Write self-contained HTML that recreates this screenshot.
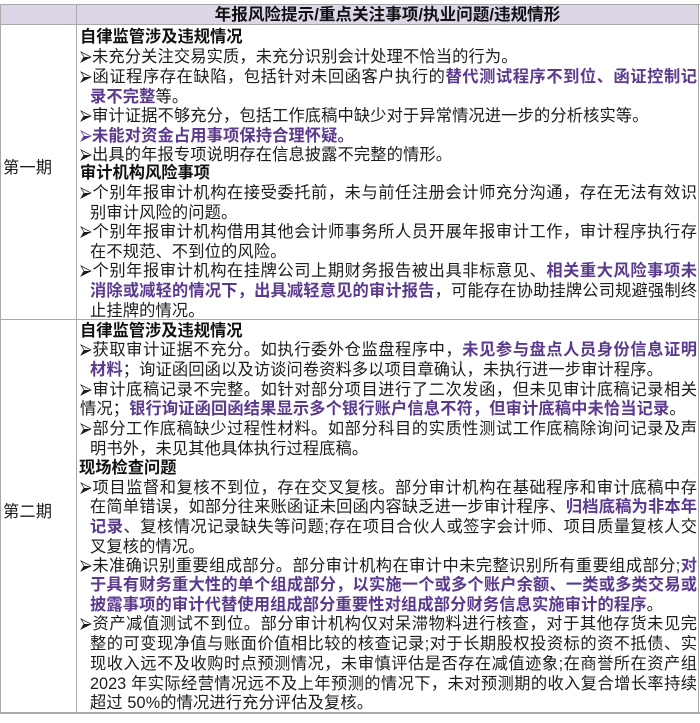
<!DOCTYPE html>
<html lang="zh"><head><meta charset="utf-8">
<style>
html,body{margin:0;padding:0;background:#fff}
#p{position:relative;width:700px;height:723px;overflow:hidden;background:#fff;color:#1c1c1c;font-family:"Liberation Sans","Noto Sans CJK SC",sans-serif;font-size:16.25px;filter:blur(.3px)}
.h{position:absolute;background:#a9a9a9}
.l{position:absolute;left:80px;width:617px;height:20px;line-height:20px;white-space:nowrap;margin-top:1px;letter-spacing:.12px}
.c{left:90px;width:607px}
.j{text-align:justify;text-align-last:justify;text-justify:inter-character;white-space:normal;letter-spacing:0}
.b{font-weight:700;color:#111;letter-spacing:0}
.v{color:#5b3a8e;font-weight:700}
svg{display:inline-block;width:12px;height:12px;vertical-align:-1px;fill:#1a1a1a;stroke:#1a1a1a;stroke-width:.7}
.v svg{fill:#5b3a8e;stroke:#5b3a8e}
.o{fill:none}
.f{stroke:none}
</style></head><body><div id="p">
<svg width="0" height="0" style="position:absolute;width:0;height:0"><symbol id="a" viewBox="0 0 12 12"><path class="o" d="M1 1 11 6 1 11 4 6Z"/><path class="f" d="M4 6H11L1 11Z"/></symbol></svg>
<div style="position:absolute;left:1px;top:5px;width:698px;height:19px;background:#dcd6e6"></div>
<div class="h" style="left:0;top:4px;width:700px;height:1px"></div>
<div class="h" style="left:0;top:24px;width:700px;height:1px"></div>
<div class="h" style="left:0;top:319px;width:700px;height:1px"></div>
<div class="h" style="left:0;top:712px;width:700px;height:2px"></div>
<div class="h" style="left:0;top:4px;width:1px;height:710px"></div>
<div class="h" style="left:76px;top:4px;width:1px;height:710px"></div>
<div class="h" style="left:698px;top:4px;width:1px;height:710px"></div>
<div class="l b" style="left:77px;width:621px;top:4px;height:19px;line-height:20px;text-align:center;font-size:16.6px">年报风险提示/重点关注事项/执业问题/违规情形</div>
<div class="l" style="left:3px;width:70px;top:157px">第一期</div>
<div class="l" style="left:3px;width:70px;top:501px">第二期</div>

<div class="l b" style="top:26px">自律监管涉及违规情况</div>
<div class="l" style="top:46px"><svg viewBox="0 0 12 12"><use href="#a"/></svg>未充分关注交易实质，未充分识别会计处理不恰当的行为。</div>
<div class="l j" style="top:66px"><svg viewBox="0 0 12 12"><use href="#a"/></svg>函证程序存在缺陷，包括针对未回函客户执行的<span class="v">替代测试程序不到位、函证控制记</span></div>
<div class="l c" style="top:86px"><span class="v">录不完整</span>等。</div>
<div class="l" style="top:105px"><svg viewBox="0 0 12 12"><use href="#a"/></svg>审计证据不够充分，包括工作底稿中缺少对于异常情况进一步的分析核实等。</div>
<div class="l v" style="top:125px"><svg viewBox="0 0 12 12"><use href="#a"/></svg>未能对资金占用事项保持合理怀疑。</div>
<div class="l" style="top:144px"><svg viewBox="0 0 12 12"><use href="#a"/></svg>出具的年报专项说明存在信息披露不完整的情形。</div>
<div class="l b" style="top:162px">审计机构风险事项</div>
<div class="l j" style="top:182px"><svg viewBox="0 0 12 12"><use href="#a"/></svg>个别年报审计机构在接受委托前，未与前任注册会计师充分沟通，存在无法有效识</div>
<div class="l c" style="top:202px">别审计风险的问题。</div>
<div class="l j" style="top:221px"><svg viewBox="0 0 12 12"><use href="#a"/></svg>个别年报审计机构借用其他会计师事务所人员开展年报审计工作，审计程序执行存</div>
<div class="l c" style="top:241px">在不规范、不到位的风险。</div>
<div class="l j" style="top:260px"><svg viewBox="0 0 12 12"><use href="#a"/></svg>个别年报审计机构在挂牌公司上期财务报告被出具非标意见、<span class="v">相关重大风险事项未</span></div>
<div class="l c j" style="top:280px"><span class="v">消除或减轻的情况下，出具减轻意见的审计报告</span>，可能存在协助挂牌公司规避强制终</div>
<div class="l c" style="top:300px">止挂牌的情况。</div>

<div class="l b" style="top:320px">自律监管涉及违规情况</div>
<div class="l j" style="top:339px"><svg viewBox="0 0 12 12"><use href="#a"/></svg>获取审计证据不充分。如执行委外仓监盘程序中，<span class="v">未见参与盘点人员身份信息证明</span></div>
<div class="l c" style="top:359px"><span class="v">材料</span>；询证函回函以及访谈问卷资料多以项目章确认，未执行进一步审计程序。</div>
<div class="l j" style="top:379px"><svg viewBox="0 0 12 12"><use href="#a"/></svg>审计底稿记录不完整。如针对部分项目进行了二次发函，但未见审计底稿记录相关</div>
<div class="l" style="top:398px">情况；<span class="v">银行询证函回函结果显示多个银行账户信息不符，但审计底稿中未恰当记录</span>。</div>
<div class="l j" style="top:418px"><svg viewBox="0 0 12 12"><use href="#a"/></svg>部分工作底稿缺少过程性材料。如部分科目的实质性测试工作底稿除询问记录及声</div>
<div class="l c" style="top:438px">明书外，未见其他具体执行过程底稿。</div>
<div class="l b" style="top:457px;left:79px">现场检查问题</div>
<div class="l j" style="top:477px"><svg viewBox="0 0 12 12"><use href="#a"/></svg>项目监督和复核不到位，存在交叉复核。部分审计机构在基础程序和审计底稿中存</div>
<div class="l c j" style="top:496px">在简单错误，如部分往来账函证未回函内容缺乏进一步审计程序、<span class="v">归档底稿为非本年</span></div>
<div class="l c j" style="top:516px"><span class="v">记录</span>、复核情况记录缺失等问题;存在项目合伙人或签字会计师、项目质量复核人交</div>
<div class="l c" style="top:536px">叉复核的情况。</div>
<div class="l j" style="top:555px"><svg viewBox="0 0 12 12"><use href="#a"/></svg>未准确识别重要组成部分。部分审计机构在审计中未完整识别所有重要组成部分;<span class="v">对</span></div>
<div class="l c j" style="top:574px"><span class="v">于具有财务重大性的单个组成部分，以实施一个或多个账户余额、一类或多类交易或</span></div>
<div class="l c" style="top:594px"><span class="v">披露事项的审计代替使用组成部分重要性对组成部分财务信息实施审计的程序</span>。</div>
<div class="l j" style="top:613px"><svg viewBox="0 0 12 12"><use href="#a"/></svg>资产减值测试不到位。部分审计机构仅对呆滞物料进行核查，对于其他存货未见完</div>
<div class="l c j" style="top:633px">整的可变现净值与账面价值相比较的核查记录;对于长期股权投资标的资不抵债、实</div>
<div class="l c j" style="top:653px">现收入远不及收购时点预测情况，未审慎评估是否存在减值迹象;在商誉所在资产组</div>
<div class="l c j" style="top:673px">2023 年实际经营情况远不及上年预测的情况下，未对预测期的收入复合增长率持续</div>
<div class="l c" style="top:692px">超过 50%的情况进行充分评估及复核。</div>
</div></body></html>
